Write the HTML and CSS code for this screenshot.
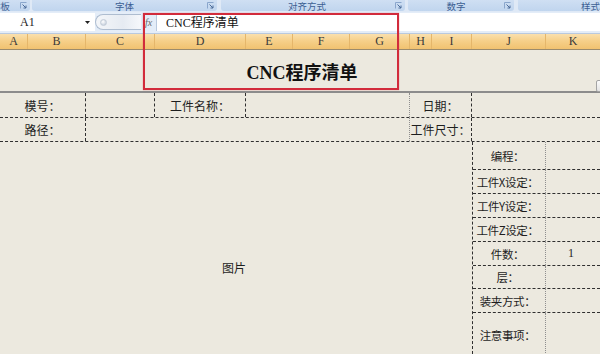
FILE: index.html
```html
<!DOCTYPE html>
<html lang="zh-CN">
<head>
	<meta charset="UTF-8">
	<meta name="viewport" content="width=device-width, initial-scale=1.0">
	<title>CNC程序清单</title>

	<link rel="stylesheet" href="styles.css">
</head>
<body>
	<div class="window">
		<!-- ribbon group captions -->
		<div class="ribbon">
			<div class="group g-clip">
				<span class="caption">剪贴板</span>
				<svg class="launcher" viewBox="0 0 7 7" width="7" height="7"><path d="M0.5 6.5V0.5H6.5" fill="none" stroke="#8aa6cc"/><path d="M2.5 2.5L6 6M6 3.5V6H3.5" fill="none" stroke="#4a6a98"/></svg>
			</div>
			<div class="group g-font">
				<span class="caption">字体</span>
				<svg class="launcher" viewBox="0 0 7 7" width="7" height="7"><path d="M0.5 6.5V0.5H6.5" fill="none" stroke="#8aa6cc"/><path d="M2.5 2.5L6 6M6 3.5V6H3.5" fill="none" stroke="#4a6a98"/></svg>
			</div>
			<div class="group g-align">
				<span class="caption">对齐方式</span>
				<svg class="launcher" viewBox="0 0 7 7" width="7" height="7"><path d="M0.5 6.5V0.5H6.5" fill="none" stroke="#8aa6cc"/><path d="M2.5 2.5L6 6M6 3.5V6H3.5" fill="none" stroke="#4a6a98"/></svg>
			</div>
			<div class="group g-number">
				<span class="caption">数字</span>
				<svg class="launcher" viewBox="0 0 7 7" width="7" height="7"><path d="M0.5 6.5V0.5H6.5" fill="none" stroke="#8aa6cc"/><path d="M2.5 2.5L6 6M6 3.5V6H3.5" fill="none" stroke="#4a6a98"/></svg>
			</div>
			<div class="group g-style">
				<span class="caption">样式</span>
			</div>
		</div>

		<!-- name box + formula bar -->
		<div class="formula-bar">
			<div class="name-box">
				<span>A1</span>
				<svg class="caret" viewBox="0 0 5 3" width="5" height="3"><path d="M0 0H5L2.5 3Z" fill="#222"/></svg>
			</div>
			<div class="splitter"><span class="knob"></span></div>
			<div class="fx">fx</div>
			<div class="formula">CNC程序清单</div>
		</div>

		<!-- column headers -->
		<div class="col-headers">
			<div class="col c-a">A</div>
			<div class="col c-b">B</div>
			<div class="col c-c">C</div>
			<div class="col c-d">D</div>
			<div class="col c-e">E</div>
			<div class="col c-f">F</div>
			<div class="col c-g">G</div>
			<div class="col c-h">H</div>
			<div class="col c-i">I</div>
			<div class="col c-j">J</div>
			<div class="col c-k">K</div>
		</div>

		<!-- worksheet -->
		<div class="sheet">
			<div class="title-row">CNC程序清单</div>

			<div class="info-row row-1">
				<div class="cell dash">模号：</div>
				<div class="cell dash"></div>
				<div class="cell dash">工件名称：</div>
				<div class="cell dot"></div>
				<div class="cell dash">日期：</div>
				<div class="cell"></div>
			</div>
			<div class="info-row row-2">
				<div class="cell dash">路径：</div>
				<div class="cell dot"></div>
				<div class="cell dash">工件尺寸：</div>
				<div class="cell"></div>
			</div>

			<div class="sheet-body">
				<div class="picture">图片</div>
				<div class="details">
					<div class="detail tall"><span class="label">编程：</span><span class="value"></span></div>
					<div class="detail"><span class="label">工件X设定：</span><span class="value"></span></div>
					<div class="detail"><span class="label">工件Y设定：</span><span class="value"></span></div>
					<div class="detail"><span class="label">工件Z设定：</span><span class="value"></span></div>
					<div class="detail"><span class="label">件数：</span><span class="value">1</span></div>
					<div class="detail short"><span class="label">层：</span><span class="value"></span></div>
					<div class="detail"><span class="label">装夹方式：</span><span class="value"></span></div>
					<div class="detail notes"><span class="label">注意事项：</span><span class="value"></span></div>
				</div>
			</div>
		</div>

		<!-- overlays -->
		<div class="highlight"></div>
		<div class="paste-tag"></div>
	</div>
</body>
</html>
```

FILE: styles.css
```css
*,
*::before,
*::after {
	margin: 0;
	padding: 0;
	box-sizing: border-box;
}

:root {
	--sheet-bg: #ece9df;
	--ribbon-bg: #dfe9f6;
	--caption-text: #3c5f93;
	--line-dark: #2f2f2f;
	--line-dot: #8e8e8e;
	--cell-text: #1e1e1e;
	--cjk: "Noto Sans CJK SC", sans-serif;
}

body {
	background: var(--sheet-bg);
	font-family: "Liberation Serif", "Noto Sans CJK SC", serif;
	color: var(--cell-text);
	overflow: hidden;
}

.window {
	position: relative;
	width: 600px;
	height: 354px;
	overflow: hidden;
}

/**
* Ribbon captions
*/
.ribbon {
	display: flex;
	height: 12px;
	background: var(--ribbon-bg);
}

.group {
	display: flex;
	align-items: flex-start;
	justify-content: center;
	position: relative;
	height: 11px;
	background: linear-gradient(to bottom, #cfdff3, #c0d5ee);
	border-radius: 0 0 3px 3px;
	overflow: hidden;
	font-family: var(--cjk);
	font-size: 9.5px;
	color: var(--caption-text);
	white-space: nowrap;
}

.caption {
	display: block;
	line-height: 10px;
	padding-top: 0.5px;
}

.group .launcher {
	position: absolute;
	right: 3px;
	top: 2px;
}

.g-clip {
	width: 30px;
	margin-right: 2px;
	justify-content: flex-end;
	padding-right: 20px;
}

.g-font {
	width: 185px;
	margin-right: 4px;
}

.g-align {
	width: 184px;
	margin-right: 3px;
	padding-right: 12px;
}

.g-number {
	width: 106px;
	margin-right: 4px;
	padding-right: 10px;
}

.g-style {
	flex: 1;
	justify-content: flex-end;
}

/**
* Formula bar
*/
.formula-bar {
	display: flex;
	align-items: center;
	height: 22px;
	padding: 1px 0 2px;
	background: #e4edf8;
	border-bottom: 1px solid #b9c9de;
}

.name-box {
	display: flex;
	align-items: center;
	justify-content: space-between;
	width: 95px;
	height: 100%;
	padding: 0 5px 0 20px;
	background: #fff;
	font-size: 12px;
}

.splitter {
	display: flex;
	align-items: center;
	width: 46px;
	height: 16px;
	padding-left: 4px;
	border: 1px solid #aebdd0;
	border-right: none;
	border-radius: 8px 0 0 8px;
	background: linear-gradient(to right, #f4f6f9, #e6ebf2 60%, #f6f8fb);
}

.knob {
	width: 7px;
	height: 7px;
	border-radius: 50%;
	background: radial-gradient(circle at 40% 35%, #fff, #b7c3d3);
	border: 1px solid #c3ccd8;
}

.fx {
	width: 15px;
	padding-left: 4px;
	font-style: italic;
	font-size: 10px;
	color: #6c6c6c;
}

.formula {
	flex: 1;
	height: 100%;
	display: flex;
	align-items: center;
	padding-left: 9px;
	background: #fff;
	border-left: 1px solid #b9c9de;
	font-size: 12px;
	color: #111;
}

/**
* Column headers
*/
.col-headers {
	display: flex;
	height: 16px;
	background: linear-gradient(to bottom, #fae0ae, #f6d08a 45%, #f1c270);
	border-bottom: 1px solid #9b8b6c;
}

.col {
	display: flex;
	align-items: center;
	justify-content: center;
	border-right: 1px solid #e5b66a;
	font-size: 12px;
	color: #3a3a3a;
}

.c-a { width: 28px; }
.c-b { width: 58px; }
.c-c { width: 69px; }
.c-d { width: 91px; }
.c-e { width: 47px; }
.c-f { width: 57px; }
.c-g { width: 60px; }
.c-h { width: 22px; }
.c-i { width: 40px; }
.c-j { width: 74px; }
.c-k { flex: 1; border-right: none; }

/**
* Worksheet
*/
.sheet {
	font-family: var(--cjk);
	font-size: 12px;
}

.title-row {
	display: flex;
	align-items: center;
	justify-content: center;
	height: 43px;
	padding: 0 0 0 4px;
	border-bottom: 2px solid #8c8c8c;
	font-family: "Liberation Serif", "Noto Sans CJK SC", serif;
	font-weight: 700;
	font-size: 18px;
	color: #111;
}

.info-row {
	display: grid;
	border-bottom: 1px dashed var(--line-dark);
}

.row-1 {
	height: 25px;
	grid-template-columns: 86px 69px 91px 164px 62px 1fr;
}

.row-2 {
	height: 24px;
	grid-template-columns: 86px 324px 62px 1fr;
}

.cell {
	display: flex;
	align-items: center;
	justify-content: center;
	white-space: nowrap;
}

.cell.dash {
	border-right: 1px dashed var(--line-dark);
}

.cell.dot {
	border-right: 1px dotted var(--line-dot);
}

.sheet-body {
	display: flex;
	height: 212px;
	overflow: hidden;
}

.picture {
	display: flex;
	align-items: center;
	justify-content: center;
	width: 472px;
	height: 250px;
	padding-right: 4px;
}

.details {
	flex: 1;
	border-left: 1px dashed var(--line-dark);
}

.detail {
	display: grid;
	grid-template-columns: 73px 1fr;
	height: 24px;
	border-bottom: 1px dashed var(--line-dark);
}

.detail.tall {
	height: 28px;
}

.detail.short {
	height: 23px;
}

.detail.notes {
	height: 44px;
	border-bottom: none;
}

.detail .label,
.detail .value {
	display: flex;
	align-items: center;
	justify-content: center;
	white-space: nowrap;
}

.detail .label {
	border-right: 1px dotted var(--line-dot);
	padding-right: 3px;
	font-size: 11.5px;
	letter-spacing: -0.4px;
}

.detail .value {
	font-family: "Liberation Serif", serif;
	padding-right: 4px;
}

/**
* Overlays
*/
.highlight {
	position: absolute;
	left: 143px;
	top: 13px;
	width: 256px;
	height: 77px;
	border: 2px solid #d22b3b;
	box-shadow: 0 0 1px rgba(210, 43, 59, 0.6);
	pointer-events: none;
}

.paste-tag {
	position: absolute;
	left: 596px;
	top: 80px;
	width: 10px;
	height: 12px;
	border: 1px solid #a4a4a4;
	border-radius: 2px;
	background: linear-gradient(to bottom, #fbfbfb, #e3e3e3);
}
```
